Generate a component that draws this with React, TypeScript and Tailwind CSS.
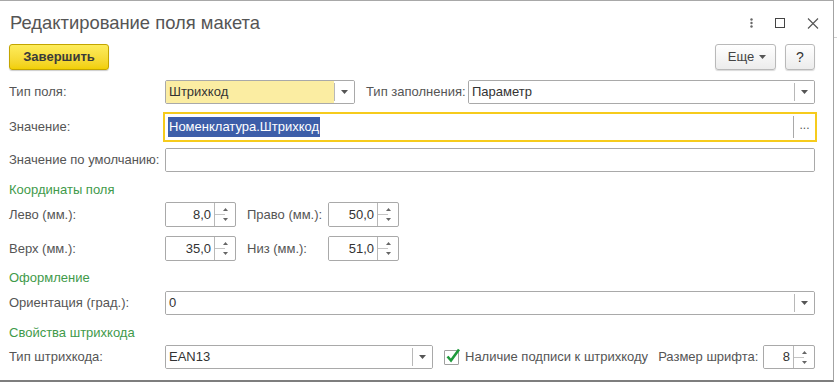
import type { ReactNode } from "react";

const font = { fontFamily: '"Liberation Sans", Arial, sans-serif' };

function Arrow() {
  return (
    <svg width="7" height="4" viewBox="0 0 7 4" className="block">
      <path d="M0 0h7L3.5 4z" fill="#555" />
    </svg>
  );
}

function DropButton() {
  return (
    <div className="flex w-[20px] shrink-0 items-center justify-center self-stretch bg-white">
      <div className="flex h-[18px] w-full items-center justify-center border-l border-[#b8b8b8]">
        <Arrow />
      </div>
    </div>
  );
}

function Spinner() {
  return (
    <div className="relative flex h-full w-[21px] shrink-0 flex-col items-center justify-center border-l border-[#b8b8b8]">
      <div className="flex flex-1 items-end pb-[3px]">
        <svg width="5" height="3" viewBox="0 0 5 3" className="block">
          <path d="M0 3h5L2.5 0z" fill="#666" />
        </svg>
      </div>
      <div className="h-px w-[10px] self-start bg-[#c4c4c4]" />
      <div className="flex flex-1 items-start pt-[3px]">
        <svg width="5" height="3" viewBox="0 0 5 3" className="block">
          <path d="M0 0h5L2.5 3z" fill="#666" />
        </svg>
      </div>
    </div>
  );
}

function Field({
  className,
  children,
  right,
  align = "left",
  bg = "bg-white",
}: {
  className?: string;
  children?: ReactNode;
  right?: ReactNode;
  align?: "left" | "right";
  bg?: string;
}) {
  return (
    <div
      className={`flex h-full items-stretch overflow-hidden rounded-[2px] border border-[#a9a9a9] bg-white ${className ?? ""}`}
    >
      <div
        className={`flex min-w-0 flex-1 items-center px-[3px] text-[13px] text-[#333] ${bg} ${
          align === "right" ? "justify-end" : ""
        }`}
      >
        {children}
      </div>
      {right}
    </div>
  );
}

function Label({ children, w = "w-[156px]" }: { children: ReactNode; w?: string }) {
  return <div className={`${w} shrink-0 text-[13px] text-[#555]`}>{children}</div>;
}

function Section({ children, mt }: { children: ReactNode; mt: string }) {
  return (
    <div className={`${mt} flex h-[16px] items-center pl-[9px] text-[13px] text-[#3f9a4a]`}>
      {children}
    </div>
  );
}

export default function App() {
  return (
    <div className="flex h-[383px] w-[837px] bg-white" style={font}>
      <div className="flex h-[382px] w-[834px] flex-col border-r border-t border-b-2 border-r-[#a3a3a3] border-t-[#a8a8a8] border-b-[#7e7e7e] bg-white">
        <div className="flex h-[43px] shrink-0 items-center justify-between pl-[10px] pr-[14px]">
          <div className="pt-[1px] text-[18.4px] text-[#555]">Редактирование поля макета</div>
          <div className="flex items-center gap-[22px] pt-[1px]">
            <svg width="3" height="10" viewBox="0 0 3 10">
              <circle cx="1.5" cy="1.5" r="1.2" fill="#666" />
              <circle cx="1.5" cy="5" r="1.2" fill="#666" />
              <circle cx="1.5" cy="8.5" r="1.2" fill="#666" />
            </svg>
            <svg width="10" height="10" viewBox="0 0 10 10">
              <rect x="0.5" y="0.5" width="9" height="9" fill="none" stroke="#444" />
            </svg>
            <svg width="12" height="11" viewBox="0 0 12 11">
              <path d="M1 0.5l10 10M11 0.5l-10 10" stroke="#555" strokeWidth="1.1" />
            </svg>
          </div>
        </div>

        <div className="flex h-[26px] shrink-0 items-stretch pl-[9px] pr-[18px]">
          <button className="w-[100px] rounded-[3px] border border-[#c3a500] bg-gradient-to-b from-[#fdec5a] to-[#f1cf00] text-[13px] font-bold text-[#3a3a3a] shadow-[0_1px_1px_rgba(0,0,0,0.2)]">
            Завершить
          </button>
          <div className="flex-1" />
          <button className="flex w-[61px] items-center justify-center gap-[5px] rounded-[3px] border border-[#b9b9b9] bg-gradient-to-b from-white to-[#ececec] pl-[3px] text-[13px] text-[#444] shadow-[0_1px_1px_rgba(0,0,0,0.15)]">
            Еще
            <Arrow />
          </button>
          <button className="ml-[9px] w-[30px] rounded-[3px] border border-[#b9b9b9] bg-gradient-to-b from-white to-[#ececec] text-[14px] text-[#333] shadow-[0_1px_1px_rgba(0,0,0,0.15)]">
            ?
          </button>
        </div>

        <div className="mt-[10px] flex h-[24px] shrink-0 items-center pl-[9px] pr-[18px]">
          <Label>Тип поля:</Label>
          <Field className="w-[190px]" bg="bg-[#fbeda2]" right={<DropButton />}>
            Штрихкод
          </Field>
          <div className="ml-[11px] w-[102px] shrink-0 text-[13px] text-[#555]">Тип заполнения:</div>
          <Field className="flex-1" right={<DropButton />}>
            Параметр
          </Field>
        </div>

        <div className="mt-[8px] flex h-[30px] shrink-0 items-center pl-[9px] pr-[16px]">
          <Label w="w-[154px]">Значение:</Label>
          <div className="flex h-full flex-1 items-stretch border-2 border-[#f6cb1c] bg-white">
            <div className="flex flex-1 items-center px-[3px]">
              <span className="bg-[#3d5ea9] px-[1px] text-[13px] text-white">Номенклатура.Штрихкод</span>
            </div>
            <div className="my-[2px] flex w-[22px] items-center justify-center border-l border-[#a9a9a9] pb-[4px] text-[12px] text-[#555]">
              ...
            </div>
          </div>
        </div>

        <div className="mt-[6px] flex h-[24px] shrink-0 items-center pl-[9px] pr-[18px]">
          <Label>Значение по умолчанию:</Label>
          <Field className="flex-1" />
        </div>

        <Section mt="mt-[10px]">Координаты поля</Section>

        <div className="mt-[4px] flex h-[25px] shrink-0 items-center pl-[9px]">
          <Label>Лево (мм.):</Label>
          <Field className="w-[71px]" align="right" right={<Spinner />}>
            8,0
          </Field>
          <div className="ml-[11px] w-[81px] shrink-0 text-[13px] text-[#555]">Право (мм.):</div>
          <Field className="w-[71px]" align="right" right={<Spinner />}>
            50,0
          </Field>
        </div>

        <div className="mt-[9px] flex h-[25px] shrink-0 items-center pl-[9px]">
          <Label>Верх (мм.):</Label>
          <Field className="w-[71px]" align="right" right={<Spinner />}>
            35,0
          </Field>
          <div className="ml-[11px] w-[81px] shrink-0 text-[13px] text-[#555]">Низ (мм.):</div>
          <Field className="w-[71px]" align="right" right={<Spinner />}>
            51,0
          </Field>
        </div>

        <Section mt="mt-[9px]">Оформление</Section>

        <div className="mt-[5px] flex h-[24px] shrink-0 items-center pl-[9px] pr-[18px]">
          <Label>Ориентация (град.):</Label>
          <Field className="flex-1" right={<DropButton />}>
            0
          </Field>
        </div>

        <Section mt="mt-[10px]">Свойства штрихкода</Section>

        <div className="mt-[4px] flex h-[24px] shrink-0 items-center pl-[9px] pr-[18px]">
          <Label>Тип штрихкода:</Label>
          <Field className="w-[268px]" right={<DropButton />}>
            EAN13
          </Field>
          <div className="relative ml-[11px] h-[15px] w-[15px] shrink-0 rounded-[1px] border border-[#a0a0a0] bg-white">
            <svg width="16" height="15" viewBox="0 0 16 15" className="absolute -top-[3px] left-[0px]">
              <path d="M2.5 8.5l3.5 4L14 1.5" fill="none" stroke="#1f9a3c" strokeWidth="2.6" />
            </svg>
          </div>
          <div className="ml-[6px] shrink-0 text-[13px] text-[#555]">Наличие подписи к штрихкоду</div>
          <div className="ml-[10px] shrink-0 text-[13px] text-[#555]">Размер шрифта:</div>
          <div className="flex-1" />
          <Field className="w-[52px]" align="right" right={<Spinner />}>
            8
          </Field>
        </div>
      </div>
      <div className="flex flex-1 flex-col">
        <div className="mt-[37px] h-px bg-[#d0d0d0]" />
      </div>
    </div>
  );
}
